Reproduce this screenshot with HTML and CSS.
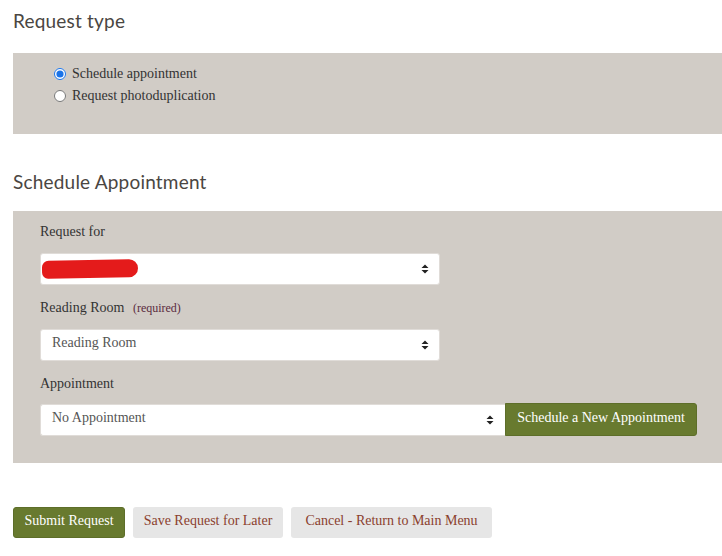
FILE: index.html
```html
<!DOCTYPE html>
<html lang="en">
<head>
<meta charset="utf-8">
<title>Request</title>
<link rel="stylesheet" href="styles.css">
</head>
<body>
<main class="page">
  <h2 class="section-title">Request type</h2>
  <div class="panel panel-type">
    <label class="radio-row"><input type="radio" name="rt" checked> <span>Schedule appointment</span></label>
    <label class="radio-row"><input type="radio" name="rt"> <span>Request photoduplication</span></label>
  </div>

  <h2 class="section-title second">Schedule Appointment</h2>
  <div class="panel panel-form">
    <div class="form-group">
      <div class="field-label">Request for</div>
      <div class="select-wrap w400">
        <div class="select"><span class="redact"></span></div>
        <svg class="arrows" width="8" height="10" viewBox="0 0 8 10"><path d="M4 0.5 L7.5 4 H0.5 Z M4 9.5 L7.5 6 H0.5 Z" fill="#222"/></svg>
      </div>
    </div>
    <div class="form-group">
      <div class="field-label">Reading Room <span class="req">(required)</span></div>
      <div class="select-wrap w400">
        <div class="select">Reading Room</div>
        <svg class="arrows" width="8" height="10" viewBox="0 0 8 10"><path d="M4 0.5 L7.5 4 H0.5 Z M4 9.5 L7.5 6 H0.5 Z" fill="#222"/></svg>
      </div>
    </div>
    <div class="form-group last">
      <div class="field-label">Appointment</div>
      <div class="input-group">
        <div class="select-wrap w465">
          <div class="select joined">No Appointment</div>
          <svg class="arrows" width="8" height="10" viewBox="0 0 8 10"><path d="M4 0.5 L7.5 4 H0.5 Z M4 9.5 L7.5 6 H0.5 Z" fill="#222"/></svg>
        </div>
        <button class="btn btn-green btn-append">Schedule a New Appointment</button>
      </div>
    </div>
  </div>

  <div class="actions">
    <button class="btn btn-green">Submit Request</button>
    <button class="btn btn-light">Save Request for Later</button>
    <button class="btn btn-light">Cancel - Return to Main Menu</button>
  </div>
</main>
</body>
</html>
```
FILE: styles.css
```css
html, body {
  margin: 0;
  padding: 0;
  background: #ffffff;
}
body {
  font-family: "Liberation Serif", "Times New Roman", serif;
  font-size: 14px;
  color: #333333;
  overflow: hidden;
}
.page {
  padding: 8px 0 0 13px;
}
.section-title {
  font-family: Lato, "Open Sans", sans-serif;
  font-weight: 400;
  font-size: 19px;
  line-height: 26px;
  color: #4a4642;
  margin: 0 0 19px 0;
  letter-spacing: 0.2px;
}
.section-title.second {
  margin-top: 35px;
  margin-bottom: 16px;
}
.panel {
  background: #d1ccc6;
}
.panel-type {
  height: 81px;
  padding: 10px 0 0 40px;
  box-sizing: border-box;
}
.radio-row {
  display: flex;
  align-items: center;
  height: 22px;
  color: #333;
}
.radio-row input {
  margin: 0 6px 0 1px;
  width: 12px;
  height: 12px;
  accent-color: #1a73e8;
}
.panel-form {
  padding: 11px 0 27px 27px;
}
.form-group {
  margin-bottom: 13px;
}
.form-group.last {
  margin-bottom: 0;
}
.field-label {
  line-height: 20px;
  margin-bottom: 11px;
  color: #333;
}
.req {
  font-size: 12px;
  color: #5b2b3e;
  margin-left: 5px;
}
.select-wrap {
  position: relative;
  height: 32px;
}
.w400 { width: 400px; }
.w465 { width: 465px; }
.select {
  height: 32px;
  box-sizing: border-box;
  background: #ffffff;
  border: 1px solid #e0dcd8;
  border-radius: 3px;
  padding: 0 11px 4px;
  display: flex;
  align-items: center;
  color: #555555;
}
.select.joined {
  border-radius: 3px 0 0 3px;
  border-right: none;
}
.arrows {
  position: absolute;
  right: 11px;
  top: 11px;
}
.redact {
  display: inline-block;
  width: 96px;
  height: 18px;
  background: #e41b1b;
  border-radius: 9px 12px 12px 8px;
  margin: 4px 0 0 -10px;
  transform: rotate(-1deg);
}
.input-group {
  display: flex;
  margin-top: -1px;
}
.btn {
  font-family: "Liberation Serif", "Times New Roman", serif;
  font-size: 14px;
  height: 31px;
  padding: 0 10px 4px;
  border: none;
  border-radius: 3px;
  cursor: pointer;
}
.btn-green {
  background: #687a2f;
  color: #ffffff;
  border: 1px solid #5d6e29;
}
.btn-append {
  height: 33px;
  margin-top: -1px;
  width: 192px;
  border-radius: 0 3px 3px 0;
}
.btn-light {
  background: #e6e6e6;
  color: #8b3f2e;
}
.actions {
  display: flex;
  gap: 8px;
  margin-top: 44px;
}
.actions .btn:nth-child(1) { width: 112px; }
.actions .btn:nth-child(2) { width: 150px; }
.actions .btn:nth-child(3) { width: 201px; }
```
